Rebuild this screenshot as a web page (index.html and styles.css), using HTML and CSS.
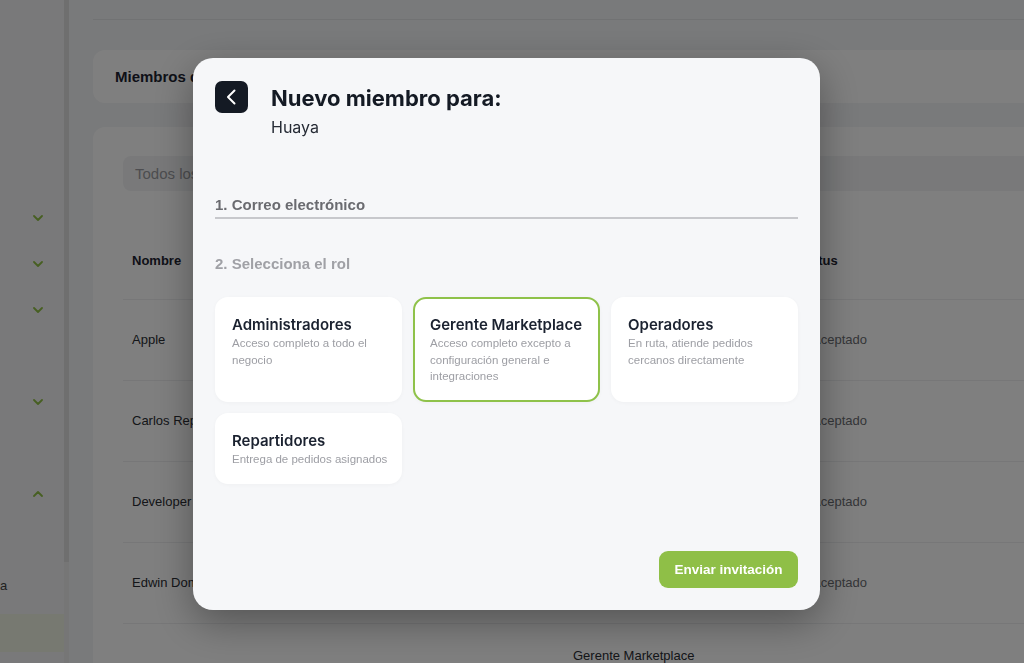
FILE: index.html
```html
<!DOCTYPE html>
<html lang="es">
<head>
    <meta charset="UTF-8">
    <meta name="viewport" content="width=device-width, initial-scale=1.0">
    <title>Miembros - Nuevo miembro</title>
    <link rel="stylesheet" href="styles.css">
</head>
<body>
    <div class="app">
        <aside class="sidebar">
            <div class="nav-list">
                <div class="nav-item"><svg class="chev" viewBox="0 0 10 6"><polyline points="1,1 5,5 9,1"/></svg></div>
                <div class="nav-item"><svg class="chev" viewBox="0 0 10 6"><polyline points="1,1 5,5 9,1"/></svg></div>
                <div class="nav-item"><svg class="chev" viewBox="0 0 10 6"><polyline points="1,1 5,5 9,1"/></svg></div>
                <div class="nav-item"></div>
                <div class="nav-item"><svg class="chev" viewBox="0 0 10 6"><polyline points="1,1 5,5 9,1"/></svg></div>
                <div class="nav-item"></div>
                <div class="nav-item"><svg class="chev" viewBox="0 0 10 6"><polyline points="1,5 5,1 9,5"/></svg></div>
                <div class="sub-item">a</div>
                <div class="sub-item active"></div>
            </div>
        </aside>
        <div class="scroll-track"><div class="scroll-thumb"></div></div>

        <main class="main">
            <div class="topbar"></div>

            <div class="page-card title-card">
                <h1>Miembros de Huaya</h1>
            </div>

            <div class="page-card table-card">
                <div class="search">Todos los miembros</div>

                <div class="table">
                    <div class="row head">
                        <div>Nombre</div>
                        <div>Rol</div>
                        <div>Status</div>
                    </div>
                    <div class="row">
                        <div>Apple</div>
                        <div>Administradores</div>
                        <div class="status">Aceptado</div>
                    </div>
                    <div class="row">
                        <div>Carlos Repartidor</div>
                        <div>Repartidores</div>
                        <div class="status">Aceptado</div>
                    </div>
                    <div class="row">
                        <div>Developer Huaya</div>
                        <div>Administradores</div>
                        <div class="status">Aceptado</div>
                    </div>
                    <div class="row">
                        <div>Edwin Dominguez</div>
                        <div>Operadores</div>
                        <div class="status">Aceptado</div>
                    </div>
                    <div class="row">
                        <div></div>
                        <div>Gerente Marketplace<br>Operadores</div>
                        <div></div>
                    </div>
                </div>
            </div>
        </main>
    </div>

    <!-- Modal: nuevo miembro -->
    <div class="overlay">
        <div class="modal">
            <div class="modal-head">
                <button class="back-btn" type="button">
                    <svg viewBox="0 0 33 32" width="33" height="32">
                        <polyline points="19.5,9.5 13,16 19.5,22.5"/>
                    </svg>
                </button>
                <div class="head-text">
                    <h2>Nuevo miembro para:</h2>
                    <p>Huaya</p>
                </div>
            </div>

            <div class="field">
                <label for="email">1. Correo electrónico</label>
            </div>

            <div class="step-label">2. Selecciona el rol</div>

            <div class="roles">
                <div class="role-card">
                    <h3>Administradores</h3>
                    <p>Acceso completo a todo el negocio</p>
                </div>
                <div class="role-card selected">
                    <h3>Gerente Marketplace</h3>
                    <p>Acceso completo excepto a configuración general e integraciones</p>
                </div>
                <div class="role-card">
                    <h3>Operadores</h3>
                    <p>En ruta, atiende pedidos cercanos directamente</p>
                </div>
                <div class="role-card">
                    <h3>Repartidores</h3>
                    <p>Entrega de pedidos asignados</p>
                </div>
            </div>

            <div class="modal-foot">
                <button class="send-btn" type="button">Enviar invitación</button>
            </div>
        </div>
    </div>
</body>
</html>
```

FILE: styles.css
```css
body {
    margin: 0;
    padding: 0;
    font-family: "Liberation Sans", Arial, sans-serif;
    background: #f3f4f6;
    color: #1d2330;
    overflow: hidden;
}

.app {
    display: flex;
    height: 663px;
}

/* sidebar (behind the modal) */
.sidebar {
    width: 64px;
    background: #f3f3f4;
    flex-shrink: 0;
}

.nav-list {
    padding-top: 195px;
}

.nav-item {
    height: 46px;
    display: flex;
    align-items: center;
}

.chev {
    width: 10px;
    height: 6px;
    margin-left: 33px;
    fill: none;
    stroke: #8fbf45;
    stroke-width: 1.8;
    stroke-linecap: round;
    stroke-linejoin: round;
}

.sub-item {
    height: 30px;
    line-height: 30px;
    font-size: 13px;
    color: #444;
    margin-top: 54px;
}

.sub-item.active {
    height: 38px;
    margin-top: 13px;
    background: #eef3e3;
}

.scroll-track {
    width: 5px;
    flex-shrink: 0;
    background: #ececec;
}

.scroll-thumb {
    height: 562px;
    background: #dedede;
}

/* main page */
.main {
    flex: 1;
    padding-left: 24px;
    overflow: hidden;
}

.topbar {
    height: 19px;
    border-bottom: 1px solid #e2e4e7;
}

.page-card {
    background: #fff;
    border-radius: 12px;
    margin-right: -30px;
}

.title-card {
    margin-top: 30px;
    height: 53px;
    display: flex;
    align-items: center;
    padding-left: 22px;
}

.title-card h1 {
    margin: 0;
    font-size: 15px;
    font-weight: 700;
}

.table-card {
    margin-top: 24px;
    padding: 29px 0 0 30px;
    height: 600px;
}

.search {
    height: 35px;
    line-height: 35px;
    padding-left: 12px;
    background: #f2f3f5;
    border-radius: 8px;
    font-size: 15px;
    color: #9a9ba0;
}

.table {
    margin-top: 31px;
}

.row {
    display: grid;
    grid-template-columns: 441px 225px 1fr;
    align-items: center;
    height: 80px;
    border-bottom: 1px solid #eeeff1;
    font-size: 13px;
    color: #2a2d33;
}

.row > div {
    padding-left: 9px;
    line-height: 16px;
}

.row.head {
    height: 77px;
    font-weight: 700;
    color: #1d2330;
}

.status {
    color: #6b6d72;
}

.row .status {
    padding-left: 23px;
}

/* modal */
.overlay {
    position: fixed;
    inset: 0;
    background: rgba(0, 0, 0, 0.5);
    display: flex;
    align-items: flex-start;
    padding: 58px 0 0 193px;
}

.modal {
    width: 627px;
    height: 552px;
    box-sizing: border-box;
    padding: 23px 22px 22px 22px;
    background: #f6f7f9;
    border-radius: 20px;
    box-shadow: 0 12px 40px rgba(0, 0, 0, 0.35);
    display: flex;
    flex-direction: column;
}

.modal-head {
    display: flex;
    align-items: flex-start;
}

.back-btn {
    width: 33px;
    height: 32px;
    padding: 0;
    border: none;
    border-radius: 7px;
    background: #141a24;
    display: block;
}

.back-btn svg {
    display: block;
    fill: none;
    stroke: #fff;
    stroke-width: 2;
    stroke-linecap: round;
    stroke-linejoin: round;
}

.head-text {
    margin-left: 23px;
}

.head-text h2 {
    margin: 3px 0 0 0;
    font-family: Inter, "Liberation Sans", sans-serif;
    font-size: 22px;
    line-height: 28px;
    font-weight: 700;
    color: #141a24;
}

.head-text p {
    margin: 5px 0 0 0;
    font-family: Inter, "Liberation Sans", sans-serif;
    font-size: 16px;
    line-height: 20px;
    color: #262b35;
}

.field {
    margin-top: 58px;
    padding-bottom: 2px;
    border-bottom: 2px solid #c7c8cc;
}

.field label {
    display: block;
    font-size: 15px;
    line-height: 20px;
    font-weight: 700;
    color: #6a6b70;
}

.step-label {
    margin-top: 35px;
    font-size: 15px;
    line-height: 20px;
    font-weight: 700;
    color: #a0a1a6;
}

.roles {
    margin-top: 23px;
    display: grid;
    grid-template-columns: repeat(3, 1fr);
    gap: 11px;
}

.role-card {
    background: #fff;
    border: 2px solid #fff;
    border-radius: 13px;
    padding: 16px 8px 15px 15px;
    box-shadow: 0 1px 4px rgba(0, 0, 0, 0.03);
}

.role-card.selected {
    border-color: #8fc24a;
}

.role-card h3 {
    margin: 0;
    font-family: Inter, "Liberation Sans", sans-serif;
    font-size: 15px;
    line-height: 20px;
    font-weight: 600;
    color: #1b2230;
}

.role-card p {
    margin: 0;
    padding-right: 12px;
    font-size: 11.5px;
    line-height: 16.5px;
    color: #9d9ea4;
}

.role-card:last-child p {
    padding-right: 0;
}

.modal-foot {
    margin-top: auto;
    display: flex;
    justify-content: flex-end;
}

.send-btn {
    width: 139px;
    height: 37px;
    border: none;
    border-radius: 9px;
    background: #8fbf47;
    color: #fff;
    font-family: "Liberation Sans", Arial, sans-serif;
    font-size: 13.5px;
    font-weight: 700;
    cursor: pointer;
}
```
